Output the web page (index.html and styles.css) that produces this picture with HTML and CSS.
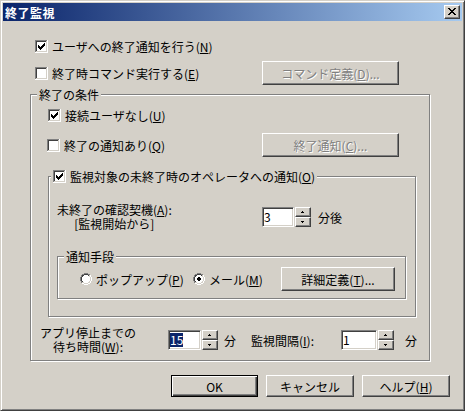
FILE: index.html
```html
<!DOCTYPE html>
<html lang="ja">
<head>
<meta charset="utf-8">
<title>終了監視</title>
<link rel="stylesheet" href="styles.css">
</head>
<body>
<svg class="sprites" xmlns="http://www.w3.org/2000/svg">
  <symbol id="chk" viewBox="0 0 13 13">
    <path d="M0 0h12v1H1v11H0z" fill="#808080"/>
    <path d="M1 1h10v1H2v9H1z" fill="#404040"/>
    <path d="M1 11h11v1H1zM11 1h1v10h-1z" fill="#D4D0C8"/>
    <path d="M0 12h13v1H0zM12 0h1v12h-1z" fill="#fff"/>
    <path d="M2 2h9v9H2z" fill="#fff"/>
  </symbol>
  <symbol id="chk-on" viewBox="0 0 13 13">
    <use href="#chk"/>
    <path d="M3 5h1v3H3zM4 6h1v3H4zM5 7h1v3H5zM6 6h1v3H6zM7 5h1v3H7zM8 4h1v3H8zM9 3h1v3H9z" fill="#000"/>
  </symbol>
  <symbol id="radio" viewBox="0 0 12 12">
    <path d="M4 0h4v1H4zM2 1h2v1H2zM8 1h2v1H8zM1 2h1v2H1zM0 4h1v4H0zM1 8h1v2H1z" fill="#808080"/>
    <path d="M10 2h1v2h-1zM11 4h1v4h-1zM10 8h1v2h-1zM2 10h2v1H2zM8 10h2v1H8zM4 11h4v1H4z" fill="#fff"/>
    <path d="M4 1h4v1H4zM2 2h2v1H2zM8 2h1v1H8zM2 3h1v1H2zM1 4h1v4H1zM2 8h1v1H2z" fill="#404040"/>
    <path d="M9 2h1v2H9zM10 4h1v4h-1zM9 8h1v2H9zM2 9h2v1H2zM8 9h1v1H8zM4 10h4v1H4z" fill="#D4D0C8"/>
    <path d="M4 2h4v1H4zM3 3h6v1H3zM2 4h8v4H2zM3 8h6v1H3zM4 9h4v1H4z" fill="#fff"/>
  </symbol>
  <symbol id="radio-on" viewBox="0 0 12 12">
    <use href="#radio"/>
    <path d="M5 4h2v1H5zM4 5h4v2H4zM5 7h2v1H5z" fill="#000"/>
  </symbol>
  <symbol id="up" viewBox="0 0 3 2">
    <path d="M1 0h1v1H1zM0 1h3v1H0z" fill="#000"/>
  </symbol>
  <symbol id="down" viewBox="0 0 3 2">
    <path d="M0 0h3v1H0zM1 1h1v1H1z" fill="#000"/>
  </symbol>
</svg>

<div class="window">
  <div class="titlebar">
    <span class="title">終了監視</span>
    <span class="close">
      <svg class="xglyph" width="8" height="7" viewBox="0 0 8 7" shape-rendering="crispEdges"><path d="M0 0h2v1H0zM6 0h2v1H6zM1 1h2v1H1zM5 1h2v1H5zM2 2h4v1H2zM3 3h2v1H3zM2 4h4v1H2zM1 5h2v1H1zM5 5h2v1H5zM0 6h2v1H0zM6 6h2v1H6z" fill="#000"/></svg>
    </span>
  </div>

  <div class="row row-notify">
    <svg class="chk"><use href="#chk-on"/></svg>
    <span class="lbl">ユーザへの終了通知を行う(<u>N</u>)</span>
  </div>

  <div class="row row-cmd">
    <div class="cell cell-cmd">
      <svg class="chk"><use href="#chk"/></svg>
      <span class="lbl">終了時コマンド実行する(<u>E</u>)</span>
    </div>
    <div class="btn btn-side disabled">コマンド定義(<u>D</u>)...</div>
  </div>

  <div class="group g-cond">
    <span class="legend legend-cond">終了の条件</span>

    <div class="row row-nouser">
      <svg class="chk"><use href="#chk-on"/></svg>
      <span class="lbl">接続ユーザなし(<u>U</u>)</span>
    </div>

    <div class="row row-endnote">
      <div class="cell cell-endnote">
        <svg class="chk"><use href="#chk"/></svg>
        <span class="lbl">終了の通知あり(<u>Q</u>)</span>
      </div>
      <div class="btn btn-side disabled">終了通知(<u>C</u>)...</div>
    </div>

    <div class="group g-oper">
      <span class="legend legend-oper">
        <svg class="chk"><use href="#chk-on"/></svg>
        <span class="lbl">監視対象の未終了時のオペレータへの通知(<u>O</u>)</span>
      </span>

      <div class="row row-trigger">
        <div class="cell cell-trigger">
          <span class="stack">未終了の確認契機(<u>A</u>):<br>[監視開始から]</span>
        </div>
        <div class="spin">
          <div class="edit edit-3">3</div>
          <div class="spinbtns">
            <div class="sb"><svg class="arr"><use href="#up"/></svg></div>
            <div class="sb"><svg class="arr"><use href="#down"/></svg></div>
          </div>
        </div>
        <span class="unit unit-after">分後</span>
      </div>

      <div class="group g-method">
        <span class="legend legend-method">通知手段</span>
        <div class="row row-method">
          <div class="cell cell-popup">
            <svg class="rad"><use href="#radio"/></svg>
            <span class="lbl">ポップアップ(<u>P</u>)</span>
          </div>
          <div class="cell cell-mail">
            <svg class="rad"><use href="#radio-on"/></svg>
            <span class="lbl">メール(<u>M</u>)</span>
          </div>
          <div class="btn btn-detail">詳細定義(<u>T</u>)...</div>
        </div>
      </div>
    </div>

    <div class="row row-wait">
      <div class="cell cell-wait">
        <span class="stack">アプリ停止までの<br>待ち時間(<u>W</u>):</span>
      </div>
      <div class="spin spin-wait">
        <div class="edit edit-15"><span class="sel">15</span></div>
        <div class="spinbtns">
          <div class="sb"><svg class="arr"><use href="#up"/></svg></div>
          <div class="sb"><svg class="arr"><use href="#down"/></svg></div>
        </div>
      </div>
      <span class="unit unit-min1">分</span>
      <span class="lbl lbl-interval">監視間隔(<u>I</u>):</span>
      <div class="spin">
        <div class="edit edit-1">1</div>
        <div class="spinbtns">
          <div class="sb"><svg class="arr"><use href="#up"/></svg></div>
          <div class="sb"><svg class="arr"><use href="#down"/></svg></div>
        </div>
      </div>
      <span class="unit unit-min2">分</span>
    </div>
  </div>

  <div class="row row-buttons">
    <div class="btn btn-dlg btn-default">OK</div>
    <div class="btn btn-dlg">キャンセル</div>
    <div class="btn btn-dlg">ヘルプ(<u>H</u>)</div>
  </div>
</div>
</body>
</html>
```

FILE: styles.css
```css
html, body {
  margin: 0;
  padding: 0;
  background: #D4D0C8;
}
body {
  font-family: "Noto Sans CJK JP", "Noto Sans", sans-serif;
  font-size: 12px;
  line-height: 13px;
  color: #000;
}
u { text-decoration: underline; text-underline-offset: 1px; }

.sprites { display: block; width: 0; height: 0; overflow: hidden; }

.window {
  width: 465px;
  height: 411px;
  box-sizing: border-box;
  border: 1px solid;
  border-color: #D4D0C8 #404040 #404040 #D4D0C8;
  box-shadow: inset 1px 1px #fff, inset -1px -1px #808080;
  padding: 2px;
  background: #D4D0C8;
}

/* title bar */
.titlebar {
  height: 18px;
  display: flex;
  align-items: center;
  justify-content: space-between;
  padding: 0 2px;
  background: linear-gradient(to right, #0A246A, #A6CAF0);
}
.title {
  color: #fff;
  font-weight: bold;
  font-size: 12px;
  letter-spacing: 0.5px;
}
.close {
  width: 16px;
  height: 14px;
  box-sizing: border-box;
  background: #D4D0C8;
  border: 1px solid;
  border-color: #fff #404040 #404040 #fff;
  box-shadow: inset -1px -1px #808080;
  display: flex;
  align-items: center;
  justify-content: center;
  padding: 0 1px 1px 0;
}
.xglyph { display: block; }

/* generic */
.row { display: flex; align-items: center; }
.cell { display: flex; align-items: center; flex: none; }
.chk { width: 13px; height: 13px; flex: none; margin-right: 4px; display: block; }
.rad { width: 12px; height: 12px; flex: none; margin-right: 4px; display: block; }
.lbl { white-space: nowrap; }
.stack { display: inline-block; text-align: center; white-space: nowrap; line-height: 14px; }

.btn {
  box-sizing: border-box;
  height: 24px;
  background: #D4D0C8;
  border: 1px solid;
  border-color: #fff #404040 #404040 #fff;
  box-shadow: inset -1px -1px #808080;
  display: flex;
  align-items: center;
  justify-content: center;
  white-space: nowrap;
  flex: none;
}
.btn.disabled {
  color: #808080;
  text-shadow: 1px 1px 0 #fff;
}

/* groups */
.group {
  position: relative;
  box-sizing: border-box;
  border: 1px solid #808080;
  box-shadow: inset 1px 1px #fff, 1px 1px #fff;
}
.legend {
  position: absolute;
  top: -7px;
  height: 13px;
  padding: 0 2px;
  background: #D4D0C8;
  display: flex;
  align-items: center;
  white-space: nowrap;
}

/* top rows */
.row-notify { margin: 19px 0 0 32px; height: 13px; }
.row-cmd { margin: 8px 0 0 32px; height: 24px; }
.cell-cmd { width: 227px; }
.btn-side { width: 137px; }

/* conditions group */
.g-cond { margin: 9px 0 0 27px; width: 400px; height: 267px; }
.legend-cond { left: 6px; }
.row-nouser { margin: 14px 0 0 17px; height: 13px; }
.row-endnote { margin: 11px 0 0 16px; height: 24px; }
.cell-endnote { width: 215px; }

/* operator notify group */
.g-oper { margin: 19px 0 0 17px; width: 368px; height: 141px; }
.legend-oper { left: 2px; }
.row-trigger { margin: 26px 0 0 8px; height: 28px; }
.cell-trigger { width: 205px; }
.unit-after { margin-left: 7px; }

/* spinner */
.spin { display: flex; align-items: center; flex: none; }
.edit {
  box-sizing: border-box;
  height: 20px;
  background: #fff;
  border: 1px solid;
  border-color: #808080 #fff #fff #808080;
  box-shadow: inset 1px 1px #404040, inset -1px -1px #D4D0C8;
  padding: 0 0 0 1px;
  display: flex;
  align-items: center;
  line-height: 14px;
}
.edit-3 { width: 32px; }
.edit-15 { width: 33px; }
.edit-1 { width: 36px; }
.sel { background: #0A246A; color: #fff; }
.spinbtns { display: flex; flex-direction: column; margin-left: 1px; }
.sb {
  box-sizing: border-box;
  width: 16px;
  height: 10px;
  background: #D4D0C8;
  border: 1px solid;
  border-color: #fff #404040 #404040 #fff;
  box-shadow: inset -1px -1px #808080;
  display: flex;
  align-items: center;
  justify-content: center;
  padding: 0 1px 1px 0;
}
.arr { width: 3px; height: 2px; display: block; }

/* notification method group */
.g-method { margin: 25px 0 0 8px; width: 349px; height: 43px; }
.legend-method { left: 6px; }
.row-method { margin: 10px 0 0 22px; height: 24px; }
.cell-popup { width: 113px; }
.cell-mail { width: 88px; }
.btn-detail { width: 114px; }

/* wait row */
.row-wait { margin: 9px 0 0 7px; height: 28px; }
.cell-wait { width: 100px; justify-content: center; }
.spin-wait { margin-left: 30px; }
.unit-min1 { margin-left: 6px; }
.lbl-interval { margin-left: 15px; width: 90px; }
.unit-min2 { margin-left: 11px; }

/* dialog buttons */
.row-buttons { margin: 14px 0 0 168px; gap: 8px; }
.btn-dlg { width: 88px; height: 22px; }
.btn-default {
  width: 87px;
  border: 1px solid #000;
  box-shadow: inset 1px 1px #fff, inset -1px -1px #404040, inset -2px -2px #808080;
}
```
